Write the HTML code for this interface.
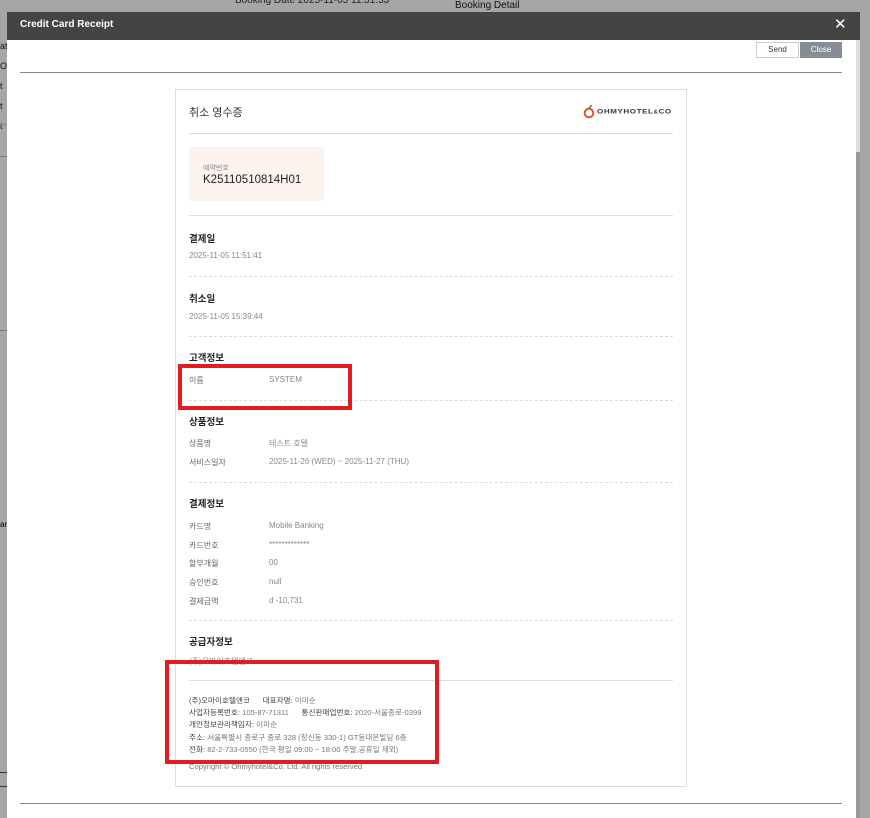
<!DOCTYPE html>
<html><head><meta charset="utf-8"><style>
*{margin:0;padding:0;box-sizing:border-box}
body{width:870px;height:818px;overflow:hidden;background:#a6a6a6;position:relative;font-family:"Liberation Sans","Noto Sans CJK KR",sans-serif}
.a{position:absolute;white-space:nowrap}
.h{font-size:9.5px;font-weight:bold;color:#222}
.s{font-size:8px;color:#888}
.k{font-size:8px;color:#666}
.d{border-top:1px dashed #ddd;position:absolute;left:189px;width:484px;height:0}
.f{font-size:7.6px;color:#777}
.f b{font-weight:normal;color:#444}
</style></head><body>
<div class="a" style="left:455px;top:0;font-size:10px;color:#111">Booking Detail</div>
<div class="a" style="left:235px;top:-5px;font-size:10px;color:#222">Booking Date 2025-11-05 11:51:33</div>
<div class="a" style="left:0;top:41px;font-size:9px;color:#111">at<br><br>O/<br><br>t<br><br>t<br><br>t</div>
<div class="a" style="left:0;top:124px;width:7px;height:1px;background:#888"></div>
<div class="a" style="left:0;top:156px;width:7px;height:1px;background:#777"></div>
<div class="a" style="left:0;top:330px;width:7px;height:1px;background:#777"></div>
<div class="a" style="left:0;top:520px;font-size:8px">ar</div>
<div class="a" style="left:0;top:772px;width:7px;height:1px;background:#333"></div>
<div class="a" style="left:0;top:786px;width:7px;height:1px;background:#333"></div>
<div class="a" style="left:856px;top:152px;width:4px;height:666px;background:#999"></div>

<div class="a" style="left:7px;top:12px;width:853px;height:28px;background:#444"></div>
<div class="a" style="left:20px;top:19px;font-size:10px;font-weight:bold;color:#fff">Credit Card Receipt</div>
<div class="a" style="left:834px;top:15px;font-size:15px;color:#fff">✕</div>
<div class="a" style="left:7px;top:40px;width:849px;height:778px;background:#fff"></div>
<div class="a" style="left:856px;top:40px;width:4px;height:112px;background:#ddd"></div>
<div class="a" style="left:756px;top:42px;width:43px;height:16px;border:1px solid #ccc;font-size:8px;text-align:center;line-height:14px;color:#333;background:#fff">Send</div>
<div class="a" style="left:800px;top:42px;width:42px;height:16px;background:#868d95;font-size:8px;text-align:center;line-height:16px;color:#fff">Close</div>
<div class="a" style="left:20px;top:72px;width:822px;height:1px;background:#888"></div>
<div class="a" style="left:20px;top:803px;width:822px;height:1px;background:#888"></div>

<div class="a" style="left:175px;top:89px;width:512px;height:698px;border:1px solid #ddd"></div>
<div class="a" style="left:189px;top:104px;font-size:11px;color:#333">취소 영수증</div>
<svg class="a" style="left:583px;top:102px" width="12" height="17" viewBox="0 0 12 17"><circle cx="6" cy="11" r="4.3" fill="none" stroke="#e8562a" stroke-width="2"/><path d="M6 6.5 L8.5 3" stroke="#3a9a3a" stroke-width="1.6"/></svg>
<div class="a" style="left:597px;top:107px;font-size:8px;font-weight:bold;color:#333;letter-spacing:.6px;transform:scaleY(.85);transform-origin:0 50%">OHMYHOTEL<span style="font-size:6px">&amp;</span>CO</div>
<div class="a" style="left:189px;top:133px;width:484px;height:1px;background:#ddd"></div>
<div class="a" style="left:189px;top:147px;width:135px;height:54px;background:#fdf3ee"></div>
<div class="a" style="left:203px;top:163px;font-size:7px;color:#888">예약번호</div>
<div class="a" style="left:203px;top:174px;font-size:11.5px;color:#222">K25110510814H01</div>
<div class="a" style="left:189px;top:215px;width:484px;height:1px;background:#ddd"></div>

<div class="a h" style="left:189px;top:231px">결제일</div>
<div class="a s" style="left:189px;top:251px">2025-11-05 11:51:41</div>
<div class="d" style="top:276px"></div>
<div class="a h" style="left:189px;top:291px">취소일</div>
<div class="a s" style="left:189px;top:312px">2025-11-05 15:39:44</div>
<div class="d" style="top:336px"></div>
<div class="a h" style="left:189px;top:350px">고객정보</div>
<div class="a k" style="left:189px;top:375px">이름</div><div class="a s" style="left:269px;top:375px">SYSTEM</div>
<div class="d" style="top:400px"></div>
<div class="a h" style="left:189px;top:414px">상품정보</div>
<div class="a k" style="left:189px;top:438px">상품명</div><div class="a s" style="left:269px;top:438px">테스트 호텔</div>
<div class="a k" style="left:189px;top:457px">서비스일자</div><div class="a s" style="left:269px;top:457px">2025-11-26 (WED) ~ 2025-11-27 (THU)</div>
<div class="d" style="top:482px"></div>
<div class="a h" style="left:189px;top:496px">결제정보</div>
<div class="a k" style="left:189px;top:521px">카드명</div><div class="a s" style="left:269px;top:521px">Mobile Banking</div>
<div class="a k" style="left:189px;top:540px">카드번호</div><div class="a s" style="left:269px;top:540px">*************</div>
<div class="a k" style="left:189px;top:558px">할부개월</div><div class="a s" style="left:269px;top:558px">00</div>
<div class="a k" style="left:189px;top:577px">승인번호</div><div class="a s" style="left:269px;top:577px">null</div>
<div class="a k" style="left:189px;top:596px">결제금액</div><div class="a s" style="left:269px;top:596px">d -10,731</div>
<div class="d" style="top:620px"></div>
<div class="a h" style="left:189px;top:634px">공급자정보</div>
<div class="a s" style="left:189px;top:656px">(주)오마이호텔앤코</div>
<div class="a" style="left:189px;top:680px;width:484px;height:1px;background:#ddd"></div>
<div class="a f" style="left:189px;top:695px;line-height:12.2px"><b>(주)오마이호텔앤코</b>&nbsp;&nbsp;&nbsp;&nbsp;&nbsp;&nbsp;<b>대표자명:</b> 이미순<br><b>사업자등록번호:</b> 105-87-71311&nbsp;&nbsp;&nbsp;&nbsp;&nbsp;&nbsp;<b>통신판매업번호:</b> 2020-서울종로-0399<br><b>개인정보관리책임자:</b> 이미순<br><b>주소:</b> 서울특별시 종로구 종로 328 (창신동 330-1) GT동대문빌딩 6층<br><b>전화:</b> 82-2-733-0550 (한국 평일 09:00 ~ 18:00 주말,공휴일 제외)</div>
<div class="a f" style="left:189px;top:762px">Copyright © Ohmyhotel&amp;Co. Ltd. All rights reserved</div>

<div class="a" style="left:178px;top:364px;width:174px;height:46px;border:4px solid #e11d1d"></div>
<div class="a" style="left:165px;top:660px;width:274px;height:104px;border:4px solid #e11d1d"></div>
</body></html>
